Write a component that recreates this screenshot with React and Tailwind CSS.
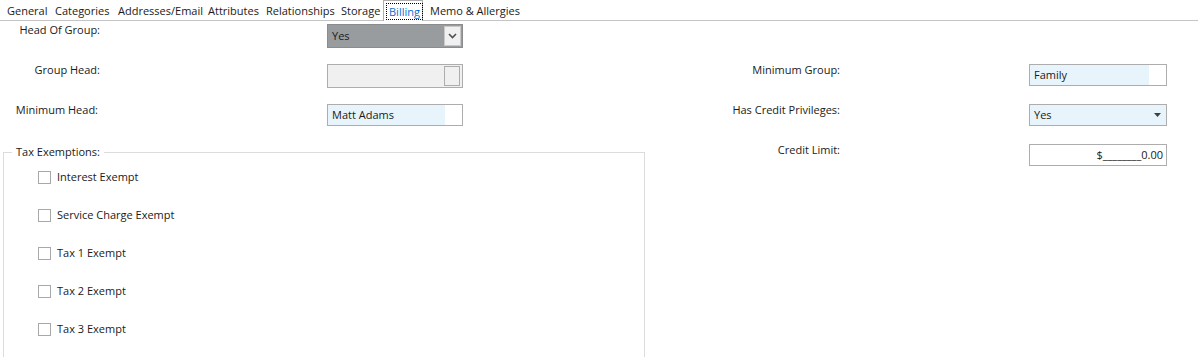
// Billing tab of the member form
// tabs on top --> two columns of fields --> group box with the tax exemptions

const TABS = [
  { id: 'general', label: 'General', w: 'w-[48px]' },
  { id: 'categories', label: 'Categories', w: 'w-[63px]' },
  { id: 'addresses', label: 'Addresses/Email', w: 'w-[90px]' },
  { id: 'attributes', label: 'Attributes', w: 'w-[58px]' },
  { id: 'relationships', label: 'Relationships', w: 'w-[75px]' },
  { id: 'storage', label: 'Storage', w: 'w-[46px]' },
];

const EXEMPTIONS = [
  'Interest Exempt',
  'Service Charge Exempt',
  'Tax 1 Exempt',
  'Tax 2 Exempt',
  'Tax 3 Exempt',
];

function Chevron() {
  return (
    <svg width="9" height="6" viewBox="0 0 9 6">
      <path d="M1 1 L4.5 4.5 L8 1" stroke="#505050" strokeWidth="1.6" fill="none" />
    </svg>
  );
}

function App() {
  return (
    <div
      className="w-[1198px] h-[357px] bg-white overflow-hidden text-[11px] leading-[16px] text-[#1a1a1a]"
      style={{ fontFamily: '"Open Sans", "Noto Sans", sans-serif' }}
    >
      {/* barre des onglets */}
      <div className="h-[21px] flex items-end pl-[3px] border-b border-[#c4c4c4]">
        {TABS.map((t) => (
          <div key={t.id} className={`${t.w} h-[20px] pl-[4px] pt-[3px] whitespace-nowrap`}>
            {t.label}
          </div>
        ))}
        <div className="w-[40px] h-[21px] -mb-px bg-white border border-b-0 border-[#adadad] pl-[3px] pt-[3px]">
          <span className="px-[2px] outline outline-1 outline-dotted outline-black text-[#0a6fd0]">
            Billing
          </span>
        </div>
        <div className="h-[20px] pl-[7px] pt-[3px] whitespace-nowrap">Memo &amp; Allergies</div>
      </div>

      <div className="flex">
        {/* colonne gauche */}
        <div className="w-[700px] pt-[3px]">
          <div className="h-[40px] flex">
            <div className="w-[100px] text-right -mt-[2px]">Head Of Group:</div>
            <div className="ml-[227px] w-[136px] h-[24px] bg-[#999c9f] border border-[#8a8c8e] flex items-center justify-between pl-[4px] pr-[1px]">
              <span>Yes</span>
              <div className="w-[17px] h-[20px] bg-[#f0f0f0] border border-[#c8c8c8] flex items-center justify-center">
                <Chevron />
              </div>
            </div>
          </div>
          <div className="h-[40px] flex">
            <div className="w-[100px] text-right -mt-[2px]">Group Head:</div>
            <div className="ml-[227px] w-[136px] h-[24px] bg-[#f0f0f0] border border-[#adadad] flex items-center justify-end pr-[2px]">
              <div className="w-[16px] h-[20px] border border-[#adadad] bg-[#f0f0f0]" />
            </div>
          </div>
          <div className="h-[40px] flex">
            <div className="w-[98px] text-right -mt-[2px]">Minimum Head:</div>
            <div className="ml-[229px] w-[136px] h-[22px] border border-[#adadad] flex">
              <div className="w-[117px] bg-[#e8f4fc] pl-[4px] leading-[20px]">Matt Adams</div>
            </div>
          </div>

          {/* cadre des exemptions */}
          <fieldset className="ml-[3px] w-[642px] h-[220px] border border-[#dcdcdc]">
            <legend className="ml-[8px] px-[4px]">Tax Exemptions:</legend>
            <div className="flex flex-col gap-[22px] pl-[34px] pt-[9px]">
              {EXEMPTIONS.map((label) => (
                <label key={label} className="flex items-center gap-[6px] h-[16px]">
                  <span className="w-[13px] h-[13px] border border-[#a8a8a8] bg-white" />
                  <span>{label}</span>
                </label>
              ))}
            </div>
          </fieldset>
        </div>

        {/* colonne droite */}
        <div className="pt-[43px]">
          <div className="h-[40px] flex">
            <div className="w-[140px] text-right -mt-[2px]">Minimum Group:</div>
            <div className="ml-[189px] w-[138px] h-[22px] border border-[#adadad] flex">
              <div className="w-[119px] bg-[#e8f4fc] pl-[4px] leading-[20px]">Family</div>
            </div>
          </div>
          <div className="h-[40px] flex">
            <div className="w-[140px] text-right -mt-[2px]">Has Credit Privileges:</div>
            <div className="ml-[189px] w-[138px] h-[22px] border border-[#adadad] bg-[#e8f4fc] flex items-center justify-between pl-[4px] pr-[5px]">
              <span>Yes</span>
              <svg width="7" height="4" viewBox="0 0 7 4">
                <path d="M0 0 H7 L3.5 4 Z" fill="#404040" />
              </svg>
            </div>
          </div>
          <div className="h-[40px] flex">
            <div className="w-[140px] text-right -mt-[2px]">Credit Limit:</div>
            <div className="ml-[189px] w-[138px] h-[22px] border border-[#adadad] text-right pr-[3px] leading-[20px]">
              $________0.00
            </div>
          </div>
        </div>
      </div>
    </div>
  );
}

export default App;
